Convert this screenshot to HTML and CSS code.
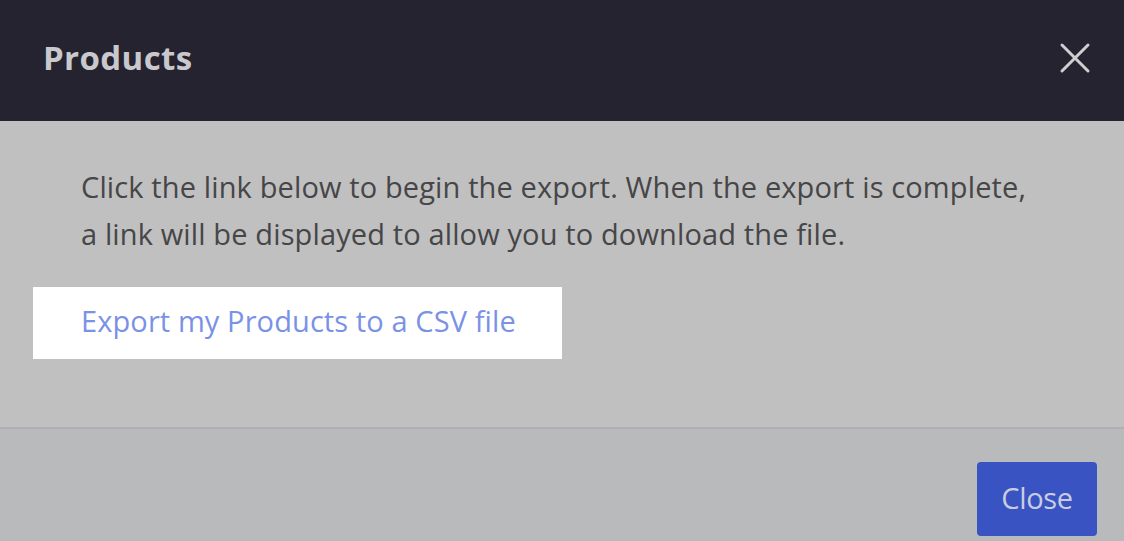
FILE: index.html
```html
<!DOCTYPE html>
<html>
<head>
<meta charset="utf-8">
<link rel="stylesheet" href="styles.css">
</head>
<body>
<div class="modal">
  <header class="modal-header">
    <h1 class="modal-title">Products</h1>
    <button class="modal-close" aria-label="Close">
      <svg width="32" height="32" viewBox="0 0 32 32"><path d="M3 3 L29 29 M29 3 L3 29" stroke="#cfcfd1" stroke-width="3" stroke-linecap="round" fill="none"/></svg>
    </button>
  </header>
  <section class="modal-body">
    <p class="modal-text">Click the link below to begin the export. When the export is complete,<br>a link will be displayed to allow you to download the file.</p>
    <div class="export-box"><a class="export-link" href="#">Export my Products to a CSV file</a></div>
  </section>
  <footer class="modal-footer">
    <button class="btn-close">Close</button>
  </footer>
</div>
</body>
</html>
```
FILE: styles.css
```css
* { box-sizing: border-box; }
html, body { margin: 0; padding: 0; }
body {
  width: 1124px;
  height: 541px;
  overflow: hidden;
  font-family: "Open Sans", "Lato", sans-serif;
  background: #c0c0c0;
}
.modal { display: flex; flex-direction: column; height: 541px; }
.modal-header {
  height: 121px;
  background: #25232f;
  display: flex;
  align-items: center;
  justify-content: space-between;
  padding: 0 33px 6px 43px;
}
.modal-title {
  margin: 0;
  font-size: 33px;
  font-weight: 700;
  color: #c9c9cd;
  letter-spacing: 0.4px;
}
.modal-close {
  background: none;
  border: 0;
  padding: 0;
  width: 32px;
  height: 32px;
  display: flex;
}
.modal-body {
  background: #c0c0c0;
  height: 308px;
  padding: 42px 0 0 33px;
  border-bottom: 2px solid #afb0b4;
}
.modal-text {
  margin: 0 0 30px 48px;
  font-size: 29px;
  line-height: 47px;
  color: #464648;
  letter-spacing: 0.13px;
}
.export-box {
  width: 529px;
  height: 72px;
  background: #ffffff;
  display: flex;
  align-items: center;
  padding-left: 48px;
  padding-bottom: 6px;
}
.export-link {
  font-size: 29px;
  color: #7a92e6;
  text-decoration: none;
  letter-spacing: 0.1px;
}
.modal-footer {
  flex: 1;
  background: #b9babc;
  display: flex;
  justify-content: flex-end;
  align-items: flex-start;
  padding: 33px 27px 0 0;
}
.btn-close {
  width: 120px;
  height: 74px;
  background: #3953c2;
  border: 0;
  border-radius: 4px;
  color: #c9cde0;
  font-family: "Open Sans", sans-serif;
  font-size: 29px;
  padding: 0 0 4px 0;
  letter-spacing: -0.3px;
}
```
